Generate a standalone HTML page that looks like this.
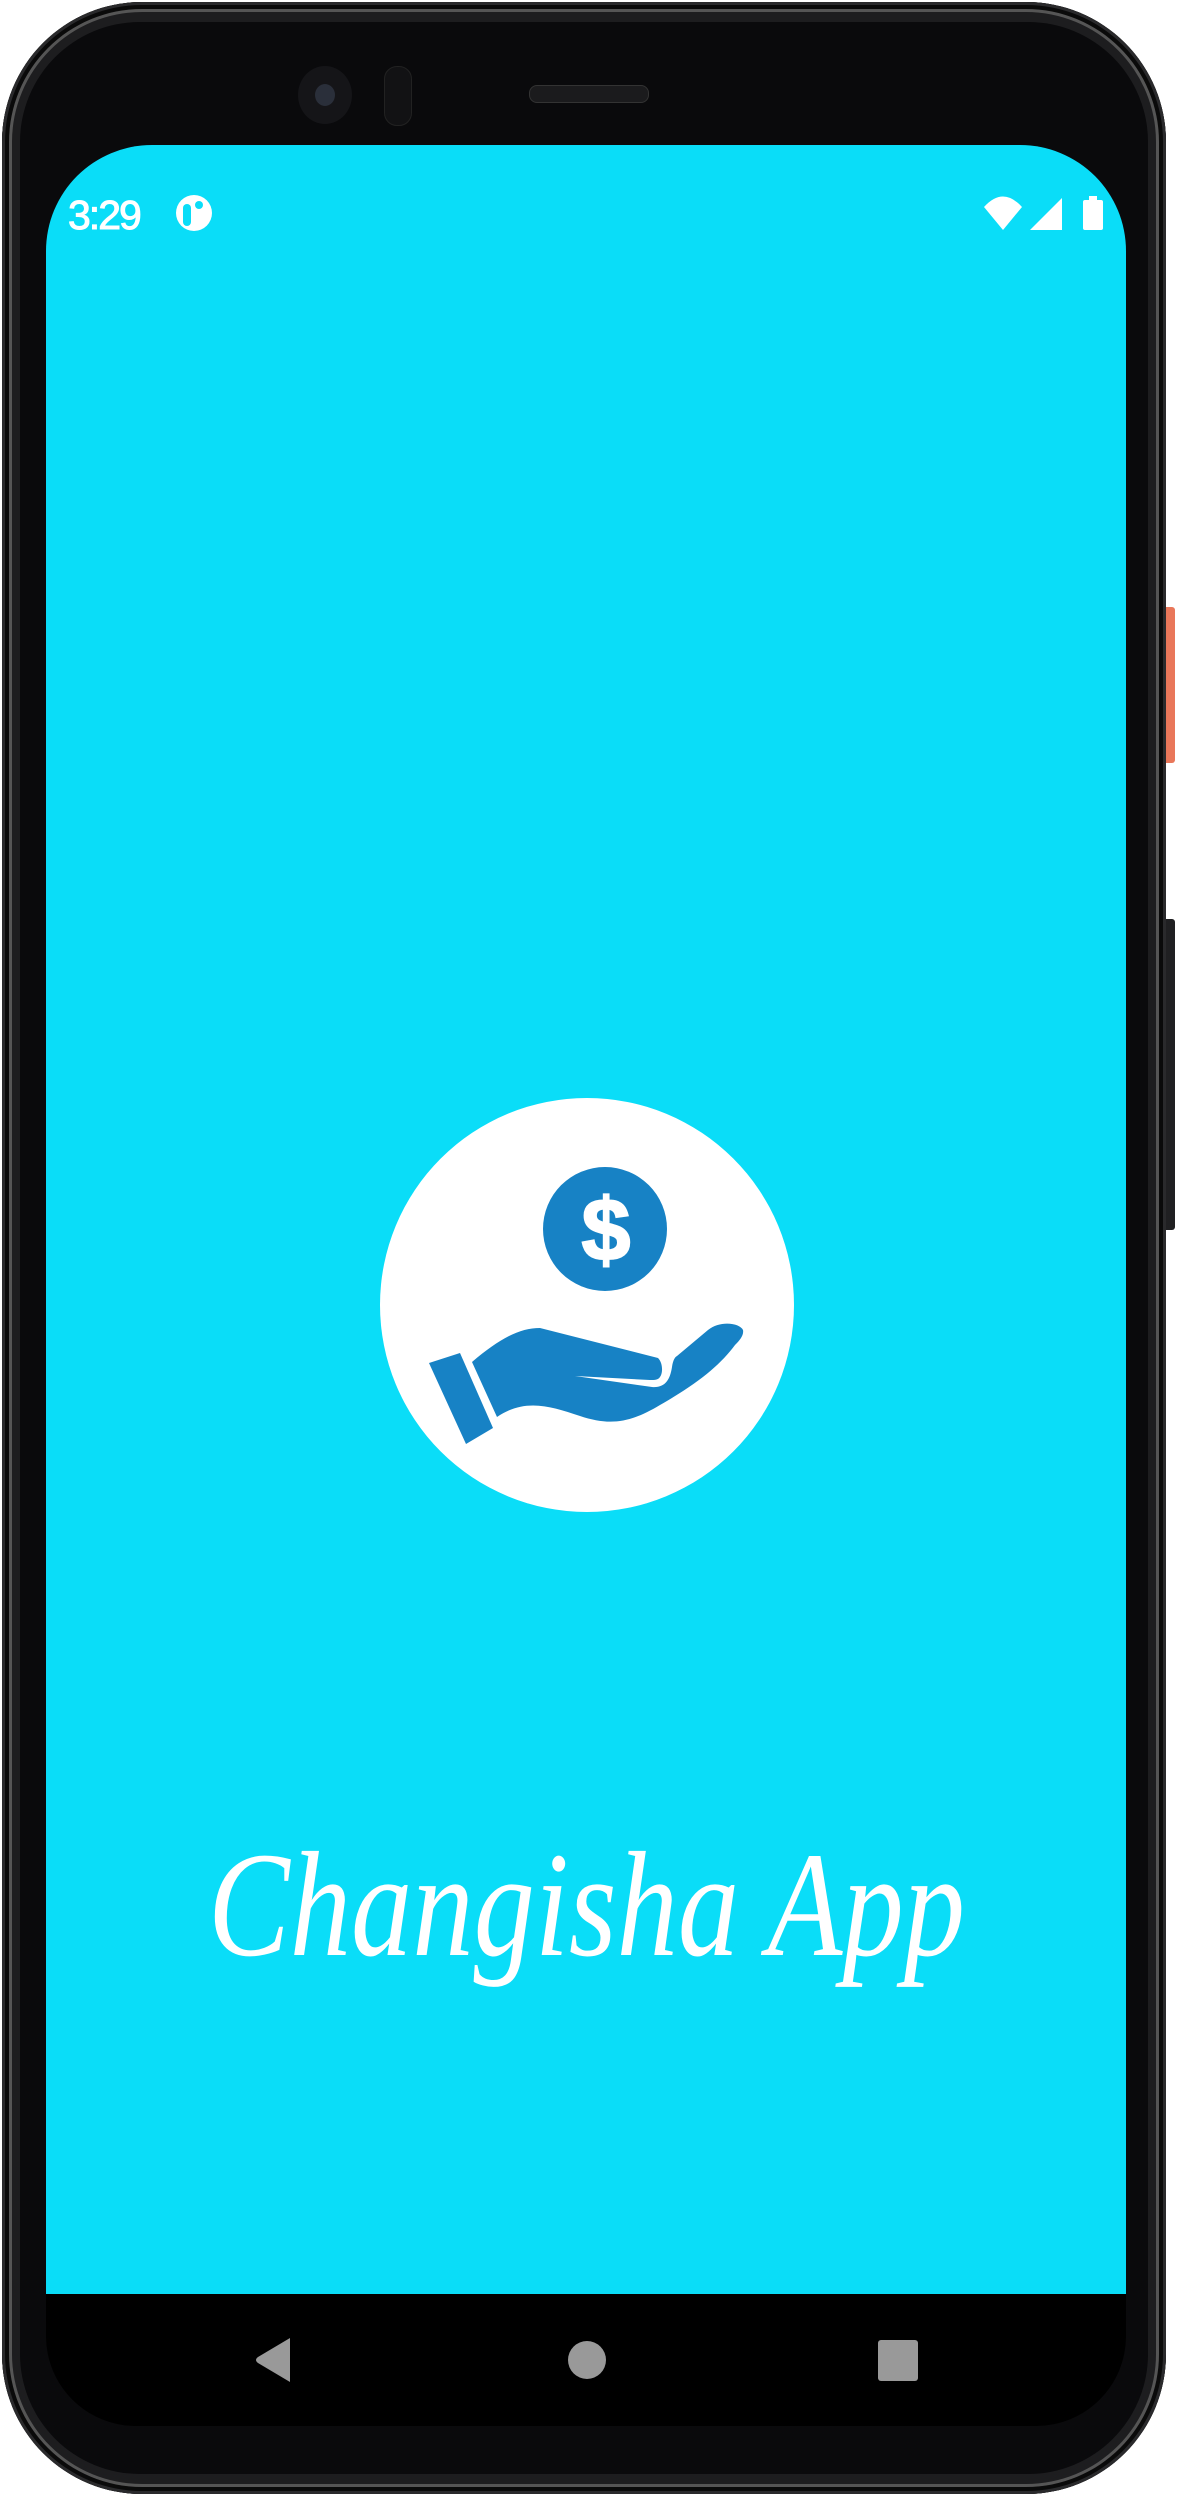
<!DOCTYPE html>
<html><head><style>
html,body{margin:0;padding:0;background:#fff;}
body{width:1178px;height:2498px;position:relative;overflow:hidden;font-family:"Liberation Sans",sans-serif;}
.body{position:absolute;left:2px;top:2px;width:1164px;height:2492px;border-radius:140px;background:#1d1d1f;box-shadow:inset 0 0 0 3px #2a2a2c,inset 0 0 0 7px #0a0a0a,inset 0 0 0 10px #555;}
.inner{position:absolute;left:20px;top:22px;width:1128px;height:2452px;border-radius:120px;background:#0a0a0c;}
.screen{position:absolute;left:46px;top:145px;width:1080px;height:2150px;background:#0addf8;border-radius:106px 106px 0 0;}
.nav{position:absolute;left:46px;top:2294px;width:1080px;height:132px;background:#000;border-radius:0 0 90px 90px;}
.btn1{position:absolute;left:1166px;top:607px;width:9px;height:156px;background:#e9775a;border-radius:0 3px 3px 0;}
.btn2{position:absolute;left:1166px;top:919px;width:9px;height:311px;background:#202022;border-radius:0 3px 3px 0;}
.time{position:absolute;left:68px;top:192px;color:#fff;font-size:41px;letter-spacing:-2px;-webkit-text-stroke:1px #fff;}
</style></head><body>
<div class="body"></div>
<div class="inner"></div>
<div class="btn1"></div><div class="btn2"></div>
<div style="position:absolute;left:298px;top:66px;width:54px;height:58px;border-radius:50%;background:#151518;"></div>
<div style="position:absolute;left:315px;top:84px;width:20px;height:22px;border-radius:50%;background:#2a2f3a;"></div>
<div style="position:absolute;left:384px;top:66px;width:26px;height:58px;border-radius:13px;background:#121214;border:1px solid #222;"></div>
<div style="position:absolute;left:529px;top:85px;width:118px;height:16px;border-radius:8px;background:#1b1b1d;border:1px solid #333;"></div>
<div class="screen"></div>
<div class="nav"></div>
<div class="time">3:29</div>
<svg style="position:absolute;left:0;top:0" width="1178" height="2498">
 <circle cx="194" cy="213" r="18" fill="#fff"/>
 <rect x="183" y="204" width="8" height="22" rx="4" fill="#0addf8"/>
 <circle cx="199" cy="205" r="4" fill="#0addf8"/>
 <path d="M984,207 Q1003,186 1022,207 L1003,230 Z" fill="#fff"/>
 <path d="M1062,198 L1062,230 L1030,230 Z" fill="#fff"/>
 <rect x="1083" y="200" width="20" height="30" rx="2" fill="#fff"/>
 <rect x="1089" y="196" width="8" height="5" fill="#fff"/>
 <path d="M290,2338 L290,2382 L258,2363 Q254,2360 258,2357 Z" fill="#999"/>
 <circle cx="587" cy="2360" r="19" fill="#999"/>
 <rect x="878" y="2340" width="40" height="41" rx="3" fill="#999"/>
 <g transform="translate(360,1080)">
  <circle cx="227" cy="225" r="207" fill="#fff"/>
  <circle cx="245" cy="149" r="62" fill="#1782c5"/>
  <text x="246" y="180" font-family="Liberation Sans" font-weight="bold" font-size="88" fill="#fff" stroke="#fff" stroke-width="2" text-anchor="middle">$</text>
  <path d="M69,283 L100,273 L133,348 L106,364 Z" fill="#1782c5"/>
  <path d="M112,282 C140,258 160,248 180,248 L298,278 C303,283 303,293 300,297 C298,300 295,300 290,300 L215,296 L292,307 C305,308 310,300 312,287 C313,280 315,277 317,276 L348,250 C360,240 380,243 383,250 C384,255 380,260 375,265 C360,285 340,302 300,325 C270,343 250,346 220,336 C190,326 165,318 137,337 Z" fill="#1782c5"/>
 </g>
 <text x="208" y="1955" font-family="Liberation Serif" font-style="italic" font-size="150" fill="#fff" textLength="757" lengthAdjust="spacingAndGlyphs">Changisha App</text>
</svg>
</body></html>
